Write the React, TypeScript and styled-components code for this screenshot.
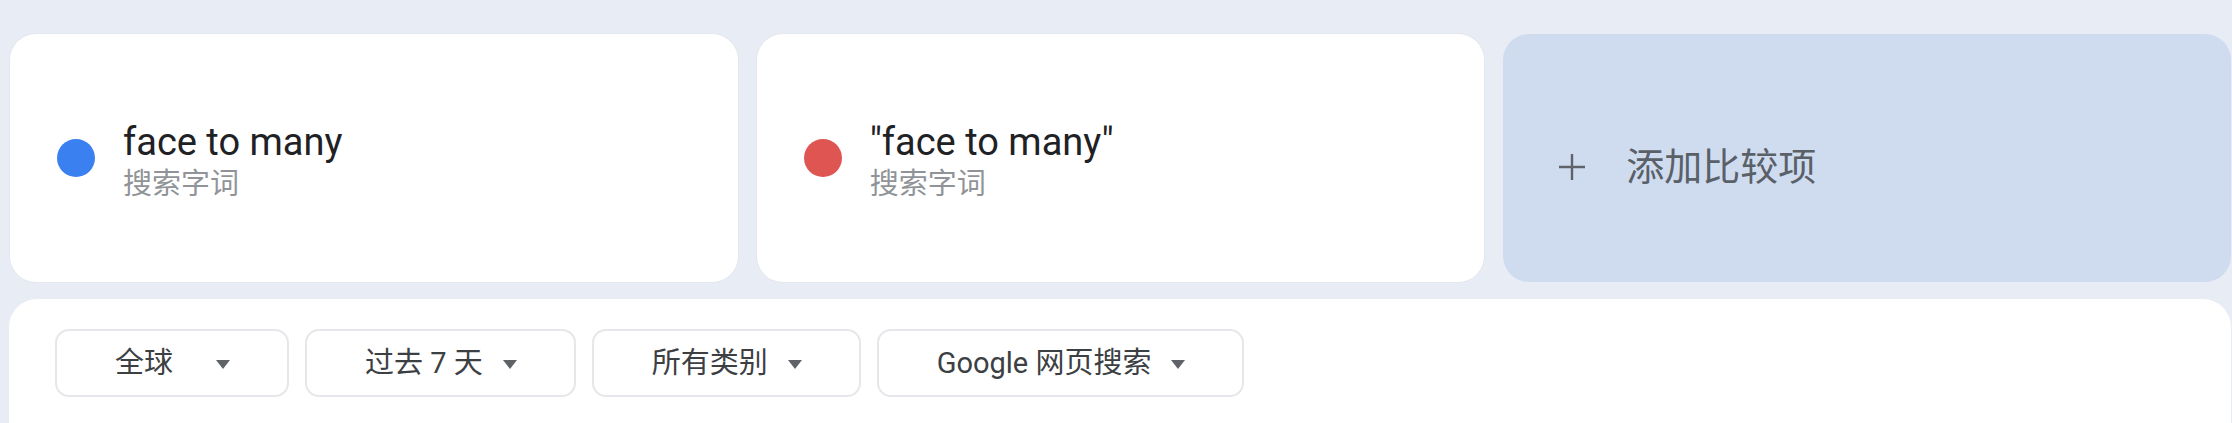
import React from 'react'
import styled, { createGlobalStyle } from 'styled-components'

const GlobalStyle = createGlobalStyle`
  html, body {
    margin: 0;
    padding: 0;
    background: #e8ecf4;
    font-family: Roboto, "Noto Sans CJK SC", sans-serif;
  }
`

const Page = styled.div`
  width: 2232px;
  height: 423px;
  overflow: hidden;
  box-sizing: border-box;
  padding: 34px 1px 0 10px;
  background: #e8ecf4;
`

const TermRow = styled.div`
  display: grid;
  grid-template-columns: repeat(3, 1fr);
  gap: 19px;
  height: 248px;
`

const TermCard = styled.div`
  display: flex;
  align-items: center;
  gap: 28px;
  padding-left: 47px;
  background: #ffffff;
  border-radius: 26px;
  box-shadow: 0 0 0 1px #e4e7ec;
`

const Dot = styled.span<{ $color: string }>`
  flex: none;
  width: 38px;
  height: 38px;
  border-radius: 50%;
  background: ${({ $color }) => $color};
`

const TermText = styled.div`
  display: flex;
  flex-direction: column;
  padding-top: 6px;
`

const TermTitle = styled.div`
  font-size: 38px;
  line-height: 44px;
  color: #202124;
`

const TermSub = styled.div`
  margin-top: 2px;
  font-size: 29px;
  line-height: 36px;
  color: #909498;
`

const AddCard = styled.div`
  display: flex;
  align-items: center;
  gap: 40px;
  padding: 17px 0 0 55px;
  background: #cfdcf0;
  border-radius: 26px;
  color: #5a6068;
  font-size: 38px;
  line-height: 44px;
`

const Plus = styled.svg`
  flex: none;
  width: 28px;
  height: 28px;
`

const FilterBar = styled.div`
  display: flex;
  gap: 16px;
  margin-top: 17px;
  margin-left: -1px;
  height: 160px;
  box-sizing: border-box;
  padding: 30px 46px;
  background: #ffffff;
  border-radius: 28px;
`

const Dropdown = styled.div<{ $minWidth?: number }>`
  display: flex;
  align-items: center;
  justify-content: space-between;
  box-sizing: border-box;
  height: 68px;
  min-width: ${({ $minWidth }) => ($minWidth ? `${$minWidth}px` : 'auto')};
  padding: 0 57px 0 58px;
  border: 2px solid #e6e7ea;
  border-radius: 14px;
  color: #3c4043;
  font-size: 29px;
  line-height: 36px;
  white-space: nowrap;
`

const Label = styled.span`
  margin-right: 20px;
`

const Caret = styled.svg`
  flex: none;
  width: 14px;
  height: 9px;
  margin-top: 2px;
`

const terms = [
  { title: 'face to many', color: '#3b80f0' },
  { title: '"face to many"', color: '#df5552' },
]

const filters = [
  { label: '全球', minWidth: 234 },
  { label: '过去 7 天' },
  { label: '所有类别' },
  { label: 'Google 网页搜索' },
]

const App = () => {
  return (
    <>
      <GlobalStyle />
      <Page>
        <TermRow>
          {terms.map((t) => (
            <TermCard key={t.title}>
              <Dot $color={t.color} />
              <TermText>
                <TermTitle>{t.title}</TermTitle>
                <TermSub>搜索字词</TermSub>
              </TermText>
            </TermCard>
          ))}
          <AddCard>
            <Plus viewBox="0 0 28 28">
              <path d="M14 1v26M1 14h26" stroke="#5f6368" strokeWidth="2.4" fill="none" />
            </Plus>
            添加比较项
          </AddCard>
        </TermRow>
        <FilterBar>
          {filters.map((f) => (
            <Dropdown key={f.label} $minWidth={f.minWidth}>
              <Label>{f.label}</Label>
              <Caret viewBox="0 0 14 9">
                <path d="M0 0h14L7 9z" fill="#5f6368" />
              </Caret>
            </Dropdown>
          ))}
        </FilterBar>
      </Page>
    </>
  )
}

export default App
